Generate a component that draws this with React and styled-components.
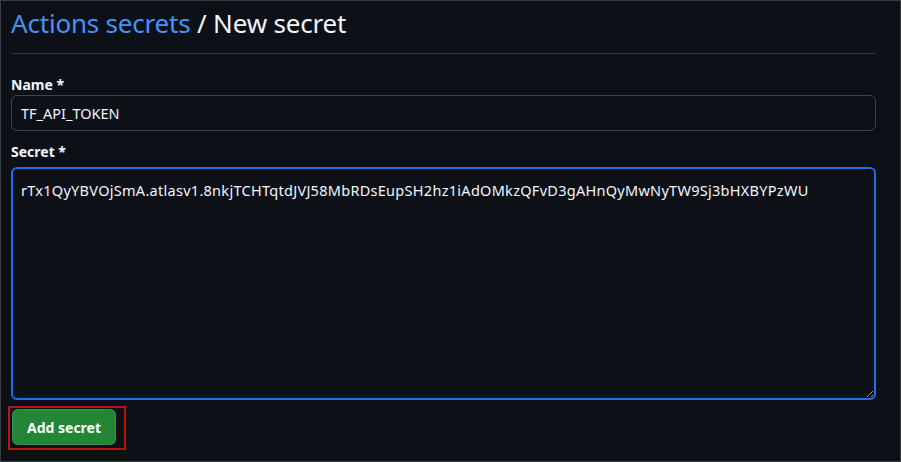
import React from 'react';
import styled, { createGlobalStyle } from 'styled-components';

const GlobalStyle = createGlobalStyle`
  html, body {
    margin: 0;
    padding: 0;
    background: #0d1117;
  }
  * {
    box-sizing: border-box;
  }
`;

const Frame = styled.div`
  width: 901px;
  height: 462px;
  border: 1px solid #3a3d42;
  background: #0d1117;
  padding: 4px 24px 0 10px;
  font-family: "Noto Sans", "Open Sans", sans-serif;
  color: #f0f6fc;
  display: flex;
  flex-direction: column;
`;

const Heading = styled.h1`
  margin: 0;
  font-size: 26px;
  letter-spacing: -0.2px;
  line-height: 36px;
  font-weight: 400;
  padding-bottom: 12px;
  border-bottom: 1px solid #30363d;
  color: #f0f6fc;
`;

const Crumb = styled.a`
  color: #4493f8;
  text-decoration: none;
`;

const Field = styled.div`
  display: flex;
  flex-direction: column;
  margin-top: ${({ $top }) => $top}px;
`;

const Label = styled.label`
  font-size: 14px;
  font-weight: 700;
  line-height: 20px;
  margin-bottom: ${({ $gap }) => $gap || 0}px;
`;

const TextInput = styled.input`
  height: 36px;
  width: 100%;
  border: 1px solid #3d444d;
  border-radius: 6px;
  background: #0d1117;
  color: #f0f6fc;
  font-family: inherit;
  font-size: 14.5px;
  padding: 0 9px;
  outline: none;
`;

const SecretArea = styled.textarea`
  height: 233px;
  width: 100%;
  border: 2px solid #1f6feb;
  border-radius: 6px;
  background: #0d1117;
  color: #f0f6fc;
  font-family: inherit;
  font-size: 14.5px;
  letter-spacing: 0.28px;
  line-height: 20px;
  padding: 11px 8px;
  outline: none;
  resize: vertical;
`;

const Highlight = styled.div`
  align-self: flex-start;
  display: inline-flex;
  margin: 6px 0 0 -3px;
  padding: 1px 8px 3px 2px;
  border: 2px solid #b8180a;
`;

const PrimaryButton = styled.button`
  height: 36px;
  width: 104px;
  border: 1px solid rgba(240, 246, 252, 0.1);
  border-radius: 6px;
  background: #238636;
  color: #ffffff;
  font-family: inherit;
  font-size: 14px;
  font-weight: 700;
  cursor: pointer;
`;

const App = () => (
  <>
    <GlobalStyle />
    <Frame>
      <Heading>
        <Crumb href="#">Actions secrets</Crumb> / New secret
      </Heading>
      <Field $top={21}>
        <Label>Name *</Label>
        <TextInput readOnly defaultValue="TF_API_TOKEN" />
      </Field>
      <Field $top={11}>
        <Label $gap={5}>Secret *</Label>
        <SecretArea
          readOnly
          defaultValue="rTx1QyYBVOjSmA.atlasv1.8nkjTCHTqtdJVJ58MbRDsEupSH2hz1iAdOMkzQFvD3gAHnQyMwNyTW9Sj3bHXBYPzWU"
        />
      </Field>
      <Highlight>
        <PrimaryButton>Add secret</PrimaryButton>
      </Highlight>
    </Frame>
  </>
);

export default App;
